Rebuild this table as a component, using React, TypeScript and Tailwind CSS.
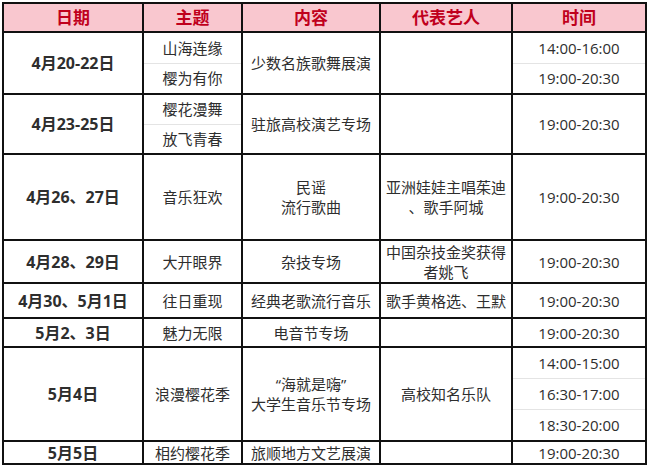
import React from "react";

const font = { fontFamily: '"Open Sans", "Noto Sans CJK SC", sans-serif' };

const Cell = ({ children, className = "" }: { children?: React.ReactNode; className?: string }) => (
  <div className={`flex items-center justify-center bg-white text-center text-[15px] leading-[20px] text-[#2e2e2e] ${className}`}>
    {children}
  </div>
);

const Split = ({ items }: { items: string[] }) => (
  <div className="flex flex-col bg-white text-[15px] text-[#2e2e2e]">
    {items.map((t, i) => (
      <div
        key={t + i}
        className={`flex flex-1 items-center justify-center ${i > 0 ? "border-t border-[#e4e4e4]" : ""}`}
      >
        {t}
      </div>
    ))}
  </div>
);

const Head = ({ children }: { children: React.ReactNode }) => (
  <div className="flex items-center justify-center bg-[#f9c7cf] text-[17px] font-bold text-[#c0001c]">
    {children}
  </div>
);

const Date = ({ children }: { children: React.ReactNode }) => (
  <Cell className="text-[16px] font-bold text-[#1a1a1a]">{children}</Cell>
);

export default function App() {
  return (
    <div className="h-[468px] w-[650px] bg-white pl-[2px] pt-[2px]" style={font}>
      <div className="grid w-fit grid-cols-[138px_97px_136px_130px_132px] grid-rows-[27px_60px_58px_84px_41px_33px_27px_92px_21px] gap-[2px] bg-[#111] p-[2px]">
        <Head>日期</Head>
        <Head>主题</Head>
        <Head>内容</Head>
        <Head>代表艺人</Head>
        <Head>时间</Head>

        <Date>4月20-22日</Date>
        <Split items={["山海连缘", "樱为有你"]} />
        <Cell>少数名族歌舞展演</Cell>
        <Cell />
        <Split items={["14:00-16:00", "19:00-20:30"]} />

        <Date>4月23-25日</Date>
        <Split items={["樱花漫舞", "放飞青春"]} />
        <Cell>驻旅高校演艺专场</Cell>
        <Cell />
        <Cell>19:00-20:30</Cell>

        <Date>4月26、27日</Date>
        <Cell>音乐狂欢</Cell>
        <Cell>
          民谣
          <br />
          流行歌曲
        </Cell>
        <Cell>
          亚洲娃娃主唱茱迪
          <br />
          、歌手阿城
        </Cell>
        <Cell>19:00-20:30</Cell>

        <Date>4月28、29日</Date>
        <Cell>大开眼界</Cell>
        <Cell>杂技专场</Cell>
        <Cell>
          中国杂技金奖获得
          <br />
          者姚飞
        </Cell>
        <Cell>19:00-20:30</Cell>

        <Date>4月30、5月1日</Date>
        <Cell>往日重现</Cell>
        <Cell>经典老歌流行音乐</Cell>
        <Cell>歌手黄格选、王默</Cell>
        <Cell>19:00-20:30</Cell>

        <Date>5月2、3日</Date>
        <Cell>魅力无限</Cell>
        <Cell>电音节专场</Cell>
        <Cell />
        <Cell>19:00-20:30</Cell>

        <Date>5月4日</Date>
        <Cell>浪漫樱花季</Cell>
        <Cell>
          “海就是嗨”
          <br />
          大学生音乐节专场
        </Cell>
        <Cell>高校知名乐队</Cell>
        <Split items={["14:00-15:00", "16:30-17:00", "18:30-20:00"]} />

        <Date>5月5日</Date>
        <Cell>相约樱花季</Cell>
        <Cell>旅顺地方文艺展演</Cell>
        <Cell />
        <Cell>19:00-20:30</Cell>
      </div>
    </div>
  );
}
